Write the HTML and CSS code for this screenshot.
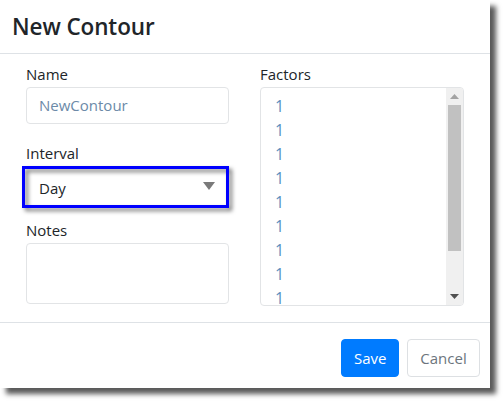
FILE: index.html
```html
<!DOCTYPE html>
<html>
<head>
<meta charset="utf-8">
<link rel="stylesheet" href="styles.css">
</head>
<body>
<div class="dialog">
  <div class="header"><h1 class="title">New Contour</h1></div>
  <div class="content">
    <div class="col">
      <label class="lbl">Name</label>
      <div class="input">NewContour</div>
      <label class="lbl lbl-gap">Interval</label>
      <div class="select-wrap">
        <div class="select">
          <span>Day</span>
          <svg class="caret" width="12" height="8" viewBox="0 0 12 8"><path d="M0 0H12L6 8Z" fill="#7a7a7a"/></svg>
        </div>
        <div class="highlight"></div>
      </div>
      <label class="lbl lbl-gap2">Notes</label>
      <div class="textarea"></div>
    </div>
    <div class="col">
      <label class="lbl">Factors</label>
      <div class="listbox">
        <div class="items">
          <div class="item">1</div>
          <div class="item">1</div>
          <div class="item">1</div>
          <div class="item">1</div>
          <div class="item">1</div>
          <div class="item">1</div>
          <div class="item">1</div>
          <div class="item">1</div>
          <div class="item">1</div>
        </div>
        <div class="scrollbar">
          <svg class="arrow" width="9" height="5" viewBox="0 0 9 5"><path d="M0 5H9L4.5 0Z" fill="#a3a3a3"/></svg>
          <div class="track"><div class="thumb"></div></div>
          <svg class="arrow" width="9" height="5" viewBox="0 0 9 5"><path d="M0 0H9L4.5 5Z" fill="#505050"/></svg>
        </div>
      </div>
    </div>
  </div>
  <div class="footer">
    <button class="btn btn-primary">Save</button>
    <button class="btn btn-light">Cancel</button>
  </div>
</div>
</body>
</html>
```
FILE: styles.css
```css
html, body {
  margin: 0;
  padding: 0;
  background: #fff;
}
body {
  font-family: "Open Sans", "Noto Sans", sans-serif;
  font-size: 15px;
  color: #212529;
  width: 504px;
  height: 403px;
  overflow: hidden;
}
.dialog {
  width: 490px;
  height: 388px;
  background: #fff;
  box-shadow: 6px 6px 5px rgba(0, 0, 0, 0.65);
  display: flex;
  flex-direction: column;
}
.header {
  height: 53px;
  border-bottom: 1px solid #dee2e6;
  padding: 0 12px;
  display: flex;
  align-items: center;
  flex: none;
}
.title {
  margin: 0;
  font-size: 22.5px;
  font-weight: 600;
  color: #212529;
  letter-spacing: -0.1px;
}
.content {
  display: flex;
  gap: 31px;
  padding: 9px 26px 0 26px;
  height: 269px;
  flex: none;
  border-bottom: 1px solid #dee2e6;
  box-sizing: border-box;
}
.col {
  display: flex;
  flex-direction: column;
}
.col:first-child { width: 203px; }
.col:last-child { width: 204px; }
.lbl {
  display: block;
  line-height: 22px;
  height: 22px;
  margin-bottom: 2px;
}
.lbl-gap { margin-top: 18px; }
.lbl-gap2 { margin-top: 13px; }
.input {
  height: 37px;
  box-sizing: border-box;
  border: 1px solid #e2e4e6;
  border-radius: 4px;
  padding: 0 12px;
  line-height: 35px;
  color: #6c8aa8;
}
.select-wrap {
  position: relative;
  height: 36px;
  margin-top: 4px;
}
.select {
  height: 36px;
  box-sizing: border-box;
  padding: 0 14px 0 13px;
  display: flex;
  align-items: center;
  justify-content: space-between;
  color: #212529;
}
.caret { margin-top: -4px; }
.highlight {
  position: absolute;
  left: -4px;
  top: -4px;
  width: 207px;
  height: 42px;
  box-sizing: border-box;
  border: 3px solid #0000ff;
  filter: drop-shadow(3px 3px 2px rgba(0, 0, 0, 0.55));
}
.textarea {
  height: 61px;
  box-sizing: border-box;
  border: 1px solid #e2e4e6;
  border-radius: 4px;
}
.listbox {
  height: 219px;
  box-sizing: border-box;
  border: 1px solid #e2e4e6;
  border-radius: 4px;
  display: flex;
  overflow: hidden;
}
.items {
  flex: 1;
  padding: 6px 0 0 14px;
  overflow: hidden;
}
.item {
  line-height: 24px;
  font-size: 16px;
  color: #5b8fc0;
}
.scrollbar {
  width: 17px;
  background: #f0f0f0;
  display: flex;
  flex-direction: column;
  align-items: center;
}
.arrow { margin: 6px 0; flex: none; }
.track {
  flex: 1;
  width: 100%;
  padding: 0 2px;
  box-sizing: border-box;
}
.thumb {
  height: 146px;
  background: #c1c1c1;
}
.footer {
  flex: 1;
  display: flex;
  justify-content: flex-end;
  align-items: flex-start;
  gap: 8px;
  padding: 16px 10px 0 0;
}
.btn {
  font-family: inherit;
  font-size: 15px;
  height: 38px;
  border-radius: 4px;
  padding: 0 12px;
  cursor: pointer;
}
.btn-primary {
  background: #007bff;
  border: 1px solid #007bff;
  color: #fff;
  width: 58px;
}
.btn-light {
  background: #fff;
  border: 1px solid #dde0e3;
  color: #6c757d;
  width: 73px;
}
```
